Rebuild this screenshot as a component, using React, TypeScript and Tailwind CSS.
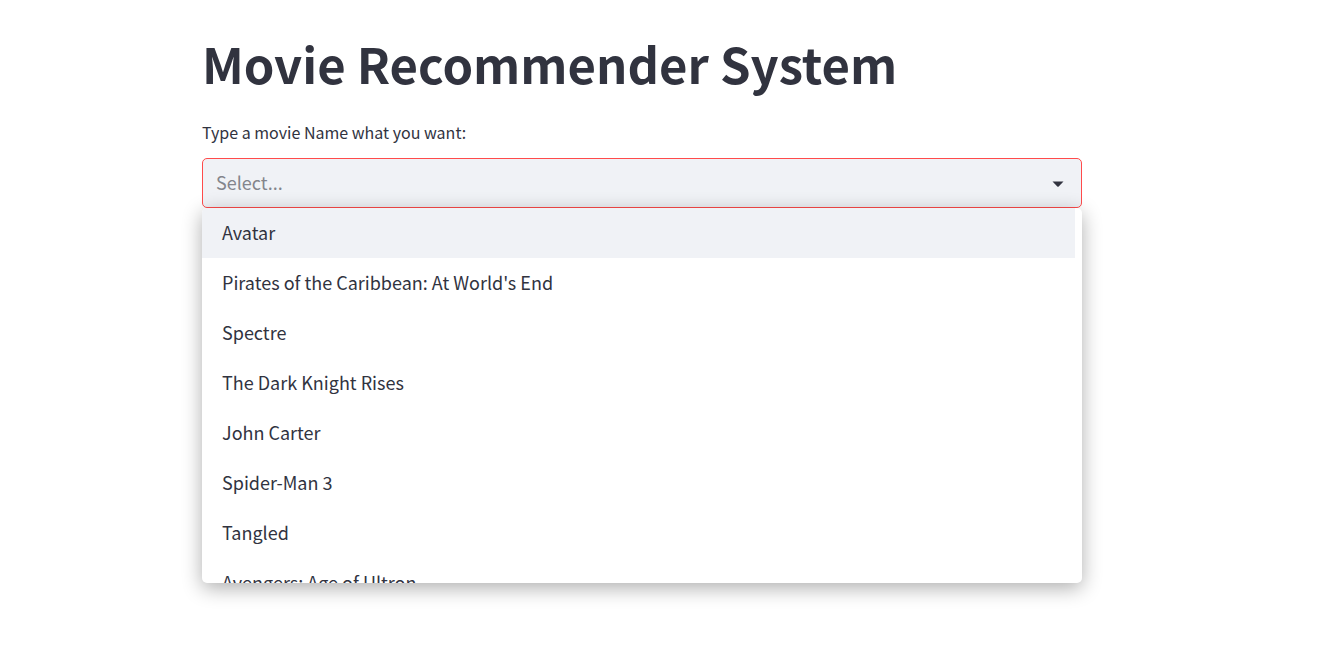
import { useState } from "react";

const movies = [
  "Avatar",
  "Pirates of the Caribbean: At World's End",
  "Spectre",
  "The Dark Knight Rises",
  "John Carter",
  "Spider-Man 3",
  "Tangled",
  "Avengers: Age of Ultron",
];

export default function App() {
  const [value, setValue] = useState("");
  const [open, setOpen] = useState(true);
  const [active, setActive] = useState(0);

  return (
    <div className="min-h-screen bg-white pr-[37px] font-['Source_Sans_Pro','Noto_Sans_CJK_JP',sans-serif] text-[#31333f]">
      <main className="mx-auto w-full max-w-[920px] px-5 pt-[30px]">
        <h1 className="text-[49px] leading-[66px] font-bold">Movie Recommender System</h1>
        <label htmlFor="movie" className="mt-6 block text-base leading-6">
          Type a movie Name what you want:
        </label>
        <div className="relative mt-[14px]">
          <div className="flex h-[50px] items-center rounded-[5px] border border-[#ff4b4b] bg-[#f0f2f6] px-[13px]">
            <input
              id="movie"
              role="combobox"
              aria-expanded={open}
              aria-controls="movie-list"
              autoComplete="off"
              placeholder="Select..."
              value={value}
              onChange={(e) => setValue(e.target.value)}
              className="h-full min-w-0 flex-1 bg-transparent pb-0.5 text-lg leading-7 outline-none placeholder:text-[#83858c]"
            />
            <button
              type="button"
              aria-label="Toggle movie list"
              onClick={() => setOpen(!open)}
              className="flex h-5 w-5 items-center justify-center"
            >
              <svg viewBox="0 0 20 20" className="h-5 w-5" fill="#31333f" aria-hidden="true">
                <path d="M4.5 8.4H15.5L10.7 13.5Q10 14.2 9.3 13.5Z" />
              </svg>
            </button>
          </div>
          {open && (
            <div className="absolute inset-x-0 top-full h-[375px] overflow-hidden rounded-[5px] bg-white pr-[7px] shadow-[0_5px_20px_rgba(0,0,0,0.32)]">
              <ul id="movie-list" role="listbox" aria-label="Movies">
                {movies.map((movie, i) => (
                  <li
                    key={movie}
                    role="option"
                    aria-selected={i === active}
                    onMouseEnter={() => setActive(i)}
                    onClick={() => {
                      setValue(movie);
                      setOpen(false);
                    }}
                    className={
                      i === active
                        ? "flex h-[50px] cursor-pointer items-center bg-[#f0f2f6] px-5 pb-0.5 text-lg leading-7"
                        : "flex h-[50px] cursor-pointer items-center px-5 pb-0.5 text-lg leading-7"
                    }
                  >
                    {movie}
                  </li>
                ))}
              </ul>
            </div>
          )}
        </div>
      </main>
    </div>
  );
}
